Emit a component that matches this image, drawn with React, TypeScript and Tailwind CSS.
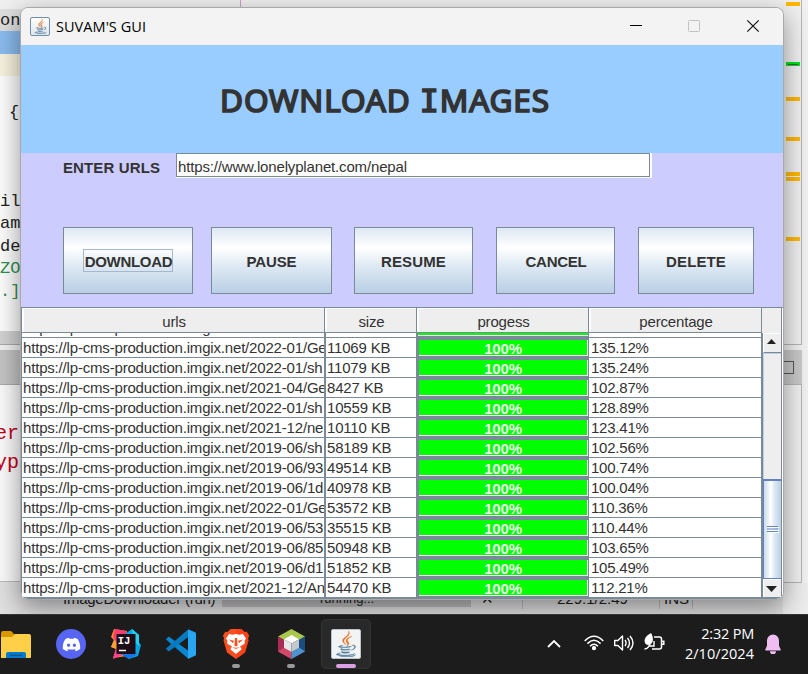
import { FaDiscord, FaJava } from "react-icons/fa";

const rows = [
  ["2022-01/Ge", "11069 KB", "135.12%"],
  ["2022-01/sh", "11079 KB", "135.24%"],
  ["2021-04/Ge", "8427 KB", "102.87%"],
  ["2022-01/sh", "10559 KB", "128.89%"],
  ["2021-12/ne", "10110 KB", "123.41%"],
  ["2019-06/sh", "58189 KB", "102.56%"],
  ["2019-06/93", "49514 KB", "100.74%"],
  ["2019-06/1d", "40978 KB", "100.04%"],
  ["2022-01/Ge", "53572 KB", "110.36%"],
  ["2019-06/53", "35515 KB", "110.44%"],
  ["2019-06/85", "50948 KB", "103.65%"],
  ["2019-06/d1", "51852 KB", "105.49%"],
  ["2021-12/An", "54470 KB", "112.21%"],
];

function JavaCup({ className }: { className: string }) {
  return (
    <span className={`relative block shrink-0 ${className}`}>
      <FaJava className="absolute inset-0 h-full w-full text-[#e4762b] [clip-path:inset(0_0_45%_0)]" stroke="#e4762b" strokeWidth="8" />
      <FaJava className="absolute inset-0 h-full w-full text-[#527f9d] [clip-path:inset(55%_0_0_0)]" stroke="#527f9d" strokeWidth="8" />
    </span>
  );
}

function TitleBar() {
  return (
    <div className="flex h-[37px] shrink-0 items-center bg-[#f3f3f3] pl-[9px]">
      <span className="flex h-[19px] w-5 items-center justify-center rounded-[2px] border border-[#6f8fa6] bg-gradient-to-b from-white to-[#dfe5ea]">
        <JavaCup className="h-[15px] w-[15px]" />
      </span>
      <span className="ml-[6px] w-[120px] whitespace-nowrap font-['Open_Sans',sans-serif] text-[14.5px] tracking-[0.05px] text-black">
        SUVAM'S GUI
      </span>
      <svg className="ml-auto mr-[20px] h-5 w-[142px]" viewBox="0 0 142 20" fill="none">
        <path d="M9 8.5h12" stroke="#000" />
        <rect x="67.5" y="3.5" width="11" height="11" rx="1" stroke="#c2c2c2" />
        <path d="M126.3 3.3l11.4 11.4M137.7 3.3l-11.4 11.4" stroke="#111" strokeWidth="1.2" />
      </svg>
    </div>
  );
}

function MetalButton({ label, className, focused }: { label: string; className: string; focused?: boolean }) {
  return (
    <button
      className={`flex h-[67px] shrink-0 items-center justify-center border border-[#7a8a99] bg-[linear-gradient(#dde8f3_0%,#ffffff_30%,#dde8f3_60%,#b8cfe5_100%)] text-[15px] font-bold leading-none text-[#333] ${className}`}
    >
      <span className={`flex h-[23px] items-center border pt-px ${focused ? "border-[#a3b8cc] pl-px" : "border-transparent"}`}>{label}</span>
    </button>
  );
}

function HeaderCell({ label, className }: { label: string; className: string }) {
  return (
    <div className={`h-[25px] shrink-0 border-b border-r border-[#7a8a99] ${className}`}>
      <div className="flex h-full items-center justify-center border-l-2 border-t border-white bg-[#eee] pt-px">{label}</div>
    </div>
  );
}

function Row({ url, size, percent }: { url: string; size: string; percent: string }) {
  return (
    <div className="flex h-5 shrink-0 leading-[19px]">
      <div className="h-full w-[304px] overflow-hidden whitespace-nowrap border-b border-r-2 border-[#7a8a99] pl-px">
        https://lp-cms-production.imgix.net/{url}
      </div>
      <div className="h-full w-[90px] border-b border-[#7a8a99] pl-[1px]">{size}</div>
      <div className="h-full w-[173px] border-b-2 border-l-[3px] border-r border-t-2 border-[#7a8a99]">
        <div className="flex h-full items-center justify-center border-b border-r border-white bg-[#00ff00] pt-px text-[15px] font-bold leading-none text-[#eee]">
          100%
        </div>
      </div>
      <div className="h-full w-[172px] border-b border-[#7a8a99] pl-[2px] tracking-[-0.22px]">{percent}</div>
    </div>
  );
}

function ScrollBar() {
  return (
    <div className="flex h-full w-[21px] shrink-0 flex-col border-l-2 border-r border-[#7a8a99] bg-[#eee]">
      <div className="flex h-5 items-center justify-center border-b border-l border-t border-b-[#7a8a99] border-l-white border-t-white pb-[3px] pr-[2px]">
        <svg className="h-[5px] w-[9px]" viewBox="0 0 9 5"><path d="M4.5 0L9 5H0z" fill="#222" /></svg>
      </div>
      <div className="h-[126px] border-l border-t border-[#b8cfe5]" />
      <div className="flex h-[100px] items-center justify-center border-b border-l border-t-2 border-[#6382bf] bg-[linear-gradient(to_right,#c8dcef,#ffffff_40%,#e0eaf5_60%,#b8cfe5)]">
        <svg className="h-[7px] w-3" viewBox="0 0 12 7"><path d="M1 1.5h11M1 4.500h11M1 6.5h11" stroke="#fff" /><path d="M0 .5h11M0 3h11M0 5.500h11" stroke="#6382bf" strokeWidth="1.2" /></svg>
      </div>
      <div className="flex h-[18px] items-center justify-center border-l border-t border-white pr-[2px]">
        <svg className="h-[6px] w-[11px]" viewBox="0 0 11 6"><path d="M5.5 6L11 0H0z" fill="#222" /></svg>
      </div>
    </div>
  );
}

function DownloadTable() {
  return (
    <div className="flex h-[292px] shrink-0 flex-col border-b-2 border-l border-t border-[#7a8a99] bg-white text-[15px] leading-none tracking-[-0.18px] text-[#333]">
      <div className="flex shrink-0">
        <HeaderCell label="urls" className="w-[303px]" />
        <HeaderCell label="size" className="w-[92px]" />
        <HeaderCell label="progess" className="w-[172px]" />
        <HeaderCell label="percentage" className="w-[173px]" />
        <div className="h-[25px] w-5 border-r border-[#7a8a99] bg-[#eee]" />
      </div>
      <div className="flex h-[264px] overflow-hidden">
        <div className="flex w-[739px] shrink-0 flex-col overflow-hidden">
          <div className="flex h-[5px] shrink-0 items-end">
            <div className="flex h-[5px] w-[304px] items-end overflow-hidden whitespace-nowrap border-b border-r-2 border-[#7a8a99] pl-px leading-[19px]">
              https://lp-cms-production.imgix.net/2022-01/Ge
            </div>
            <div className="h-[5px] w-[90px] border-b border-[#7a8a99]" />
            <div className="h-[5px] w-[173px] border-b-2 border-l-2 border-r border-[#7a8a99]">
              <div className="h-[3px] border-b border-white bg-[#00ff00]" />
            </div>
            <div className="h-[5px] w-[172px] border-b border-[#7a8a99]" />
          </div>
          {rows.map(([url, size, percent]) => (
            <Row key={size} url={url} size={size} percent={percent} />
          ))}
        </div>
        <ScrollBar />
      </div>
    </div>
  );
}

function AppWindow() {
  return (
    <div className="absolute left-[20px] top-[7px] flex h-[593px] w-[764px] flex-col overflow-hidden rounded-lg border border-[#a9a9a9] bg-[#eee] font-['Liberation_Sans',Arial,sans-serif] shadow-[0_8px_26px_rgba(0,0,0,0.42)]">
      <TitleBar />
      <div className="flex h-[108px] shrink-0 justify-center bg-[#99ccff] pr-[34px]">
        <h1 className="mt-[33px] whitespace-nowrap font-['Noto_Sans',sans-serif] text-[31.5px] font-normal leading-[44px] tracking-[0.9px] text-[#333] [-webkit-text-stroke:1.7px_#333] [stroke-linejoin:round]">
          DOWNLOAD <span className="font-['DejaVu_Sans_Mono',monospace]">I</span>MAGES
        </h1>
      </div>
      <div className="flex h-[154px] shrink-0 flex-col bg-[#ccccff]">
        <div className="flex h-[25px] shrink-0 pl-[42px]">
          <label className="w-[113px] pt-[4px] text-[15px] font-bold leading-[21px] tracking-[0.12px] text-[#333]">ENTER URLS</label>
          <div className="h-[25px] w-[476px] border-b border-r-2 border-white">
            <div className="h-6 border border-[#7a8a99] bg-white pl-px text-[15px] leading-[25px] tracking-[-0.16px] text-[#333]">
              https://www.lonelyplanet.com/nepal
            </div>
          </div>
        </div>
        <div className="mt-[49px] flex pl-[42px]">
          <MetalButton label="DOWNLOAD" className="w-[130px] tracking-[-0.3px]" focused />
          <MetalButton label="PAUSE" className="ml-[18px] w-[121px] tracking-[-0.15px]" />
          <MetalButton label="RESUME" className="ml-[22px] w-[119px] tracking-[0.15px]" />
          <MetalButton label="CANCEL" className="ml-[23px] w-[119px] pl-px tracking-[-0.25px]" />
          <MetalButton label="DELETE" className="ml-[23px] w-[116px] tracking-[0.1px]" />
        </div>
      </div>
      <DownloadTable />
    </div>
  );
}

function EditorBehind() {
  return (
    <div className="flex h-[614px] bg-[#f0f0f0] font-['Liberation_Mono',monospace] text-[17px] leading-[22px] text-[#222]">
      <div className="flex w-[783px] flex-col">
        <div className="h-[9px] pl-[240px]"><div className="h-full w-px bg-[#d59bd5]" /></div>
        <div className="h-[22px] bg-[#dedede] leading-[24px]">on</div>
        <div className="h-[23px] bg-[#8bbcf0]" />
        <div className="h-[22px] bg-[#f8f2df]" />
        <div className="h-[255px] bg-[#fdfdfd]">
          <div className="h-[115px] pl-[9px] pt-[26px]">{"{"}</div>
          <div>il</div>
          <div className="h-[23px]">am</div>
          <div>de</div>
          <div className="h-[23px] text-[#2f8f50]">ZO</div>
          <div className="text-[#2f8f50]">.]</div>
        </div>
        <div className="h-[14px] border-b border-[#aaa] bg-[#d2d2d2]" />
        <div className="h-[5px]" />
        <div className="h-[35px] border-b border-[#aaa] bg-[#c4c4c4]" />
        <div className="h-[197px] border-b border-[#bbb] bg-[#fafafa] pt-[34px] text-[20px] leading-[29px] text-[#c0001c]">
          <div className="-ml-[5px]">er</div>
          <div className="-ml-[5px]">yp</div>
        </div>
        <div className="flex h-8 items-start bg-[#e0e0e0] pt-[7px] font-['Liberation_Sans',sans-serif] text-[15px] leading-[20px]">
          <span className="w-[222px] pl-[63px] whitespace-nowrap tracking-[-0.25px]">ImageDownloader (run)</span>
          <span className="h-[18px] w-[249px] bg-[#bdbdbd] pl-[98px] text-[13px] leading-[20px]">running...</span>
          <span className="w-[51px] pl-[10px]">✕</span>
          <span className="w-[137px] border-l border-[#bbb] pl-[34px]">229:1/2:49</span>
          <span className="w-[34px] border-x border-[#bbb] pl-[4px]">INS</span>
        </div>
      </div>
      <div className="flex w-[25px] flex-col">
        <div className="flex h-[345px] w-[19px] flex-col items-start border-b border-r border-[#b5b5b5] bg-[#f0f0f0] pl-[3px]">
          <i className="mt-[2px] h-1 w-[14px] shrink-0 bg-[#ffb900]" />
          <i className="mt-14 flex h-1 w-[14px] shrink-0 items-center justify-center bg-[#00e51c]"><i className="h-px w-[10px] bg-[#555]" /></i>
          <i className="mt-[31px] h-1 w-[14px] shrink-0 bg-[#ffb900]" />
          <i className="mt-9 h-1 w-[14px] shrink-0 bg-[#ffb900]" />
          <i className="mt-[31px] h-1 w-[14px] shrink-0 bg-[#ffb900]" />
          <i className="mt-px h-1 w-[14px] shrink-0 bg-[#ffb900]" />
          <i className="mt-14 h-1 w-[14px] shrink-0 bg-[#ffb900]" />
        </div>
        <div className="mt-[5px] flex h-[34px] w-[19px] items-center bg-[#c9c9c9]">
          <i className="h-[13px] w-[11px] border border-l-0 border-[#555]" />
        </div>
        <div className="flex h-[199px] w-[19px] border-b border-r border-t border-[#b5b5b5] bg-[#f0f0f0]" />
        <div className="flex-1 bg-[#ececec]" />
      </div>
    </div>
  );
}

function VsCodeIcon() {
  return (
    <svg className="h-[30px] w-[30px]" viewBox="0 0 30 30">
      <path d="M2.8 7.6L.6 9.5a1 1 0 0 0 0 1.5L22 29.4V21.6z" fill="#0a86d0" />
      <path d="M.6 19a1 1 0 0 0 0 1.6l2.2 1.8L22 8.3V.4z" fill="#0879bd" />
      <path d="M22 0.2L29 3.2a1.5 1.5 0 0 1 1 1.4V25.4a1.5 1.5 0 0 1-1 1.4L22 30z" fill="#27a4f2" />
    </svg>
  );
}

function IdeaIcon() {
  return (
    <svg className="h-[30px] w-[30px]" viewBox="0 0 30 30">
      <path d="M3 0L16 2V27L2 29L5 20L0 18L3 11L0 8z" fill="#fd8b2b" />
      <path d="M4 0L15 2L18 6L6 14L2 8z" fill="#fb3c72" />
      <path d="M5 19L14 25L2 30z" fill="#fb3f91" />
      <path d="M3 11L6 14V20L0 18z" fill="#f9a03a" />
      <path d="M14 5L21 0L28 6L27 12L30 16L27 27L18 30L10 25z" fill="#08a4e8" />
      <path d="M21 0L28 6V17L22 11z" fill="#26cff0" />
      <path d="M10 25H27L18 30z" fill="#1674e4" />
      <rect x="5.5" y="5" width="19" height="20" fill="#1d0d17" />
      <text x="6.8" y="14.5" fill="#fff" fontSize="10.5" fontWeight="700" fontFamily="Liberation Mono, monospace">IJ</text>
      <path d="M8 21.5h7" stroke="#fff" strokeWidth="1.5" />
    </svg>
  );
}

function BraveIcon() {
  return (
    <svg className="h-[30px] w-[26px]" viewBox="0 0 26 30">
      <path d="M7.500 0h11l3 3 2.200-.3L26 6.500l-1 3 .5 2-3.500 12L13 30l-9-6.500L.5 11.500l.5-2-1-3L2.300 2.700 4.500 3z" fill="#fb4f20" />
      <path d="M13 0h5.500l3 3 2.200-.3L26 6.500l-1 3 .5 2-3.500 12L13 30z" fill="#ff3a12" opacity=".6" />
      <path d="M6 5l3.500.8L13 5l3.500.8L20 5l3 4.500-1.500 2.500.5 2-4 4.500 .5 2L13 25l-5.500-4.500.5-2L4 14l.5-2L3 9.500z" fill="#fff" />
      <path d="M6 10.500l5 1.200-1 2.500zM20 10.500l-5 1.200 1 2.500zM12 9h2l.6 7.500L13 17.500l-1.600-1zM9 18.300L13 20l4-1.700-4 .5zM5 15l4 2.500-1 1.500zM21 15l-4 2.500 1 1.500z" fill="#fb4f20" />
    </svg>
  );
}

function NetBeansIcon() {
  return (
    <svg className="h-[30px] w-[27px]" viewBox="0 0 27 30">
      <path d="M13.5 0L27 7.5L20 11.5L13.5 8L7 11.5L0 7.5z" fill="#a9c74c" />
      <path d="M0 7.5L6 11V18.5L13.5 23V30L0 22.5z" fill="#a72d56" />
      <path d="M0 22.5L6 18.5L13.5 23V30z" fill="#d24868" />
      <path d="M27 7.5L21 11V18.5L13.5 23V30L27 22.5z" fill="#4f92d0" />
      <path d="M27 7.5L21 11V18.5L27 22.5z" fill="#1c4b7e" />
      <path d="M13.5 6L21 10.3L13.5 14.6L6 10.3z" fill="#fff" />
      <path d="M6 10.3L13.5 14.6V23L6 18.7z" fill="#e4e6e8" />
      <path d="M21 10.3L13.5 14.6V23L21 18.7z" fill="#c2c9cf" />
    </svg>
  );
}

function Taskbar() {
  return (
    <div className="flex h-[60px] items-start border-t border-[#333] bg-[#1c1c1c] text-white">
      <svg className="ml-px mt-4 h-7 w-[30px] shrink-0" viewBox="0 0 30 28">
        <path d="M0 2a2 2 0 0 1 2-2h8l4 4v8H0z" fill="#dc9800" />
        <path d="M0 6h11l3-3h14a2 2 0 0 1 2 2v21a1 1 0 0 1-1 1H0z" fill="#ffcf48" />
        <path d="M5 27v-4a2 2 0 0 1 2-2h16a2 2 0 0 1 2 2v4z" fill="#0878c9" />
        <path d="M9 24.3h12" stroke="#075493" strokeWidth="1.2" />
      </svg>
      <span className="ml-[25px] mt-[14px] flex h-[30px] w-[30px] shrink-0 items-center justify-center rounded-full bg-[#5865f2]">
        <FaDiscord className="h-[19px] w-[19px]" />
      </span>
      <span className="ml-[25px] mt-[14px] shrink-0"><IdeaIcon /></span>
      <span className="ml-[25px] mt-[14px] shrink-0"><VsCodeIcon /></span>
      <span className="ml-[25px] mt-[14px] flex w-[30px] shrink-0 flex-col items-center">
        <BraveIcon />
        <i className="mt-[5px] h-1 w-2 rounded-full bg-[#999]" />
      </span>
      <span className="ml-[25px] mt-[14px] flex w-[30px] shrink-0 flex-col items-center">
        <NetBeansIcon />
        <i className="mt-[5px] h-1 w-2 rounded-full bg-[#999]" />
      </span>
      <span className="ml-[15px] mt-[4px] flex h-[50px] w-[50px] shrink-0 flex-col items-center rounded-[5px] border border-[#343434] bg-[#292929] pt-[9px]">
        <span className="flex h-[30px] w-[30px] items-center justify-center rounded-[2px] border border-[#b7c4ce] bg-[#f3f3f3]">
          <JavaCup className="h-[26px] w-[26px]" />
        </span>
        <i className="mt-[5px] h-1 w-5 shrink-0 rounded-full bg-[#dda0e4]" />
      </span>
      <svg className="ml-[176px] mt-[24px] h-[10px] w-[14px] shrink-0" viewBox="0 0 14 10" fill="none">
        <path d="M1 8l6-6 6 6" stroke="#fff" strokeWidth="1.8" />
      </svg>
      <svg className="ml-[23px] mt-[20px] h-4 w-5 shrink-0" viewBox="0 0 20 16" fill="none" stroke="#fff" strokeWidth="1.5">
        <path d="M.7 6Q10-3.4 19.3 6M3.4 8.6Q10 2 16.6 8.6M6 11.2Q10 7.2 14 11.2" />
        <circle cx="10" cy="13.2" r="1.4" fill="#fff" />
      </svg>
      <svg className="ml-[10px] mt-[19px] h-[18px] w-5 shrink-0" viewBox="0 0 20 18" fill="none" stroke="#fff" strokeWidth="1.4">
        <path d="M.7 6.5h3.2L8.5 2v14L3.900 11.500H.7z" strokeLinejoin="round" />
        <path d="M11 6q2.200 3 0 6M13.500 4q4 5 0 10M16 2q6 7 0 14" />
      </svg>
      <svg className="ml-[10px] mt-[18px] h-[18px] w-[21px] shrink-0" viewBox="0 0 21 18" fill="none" stroke="#fff" strokeWidth="1.5">
        <path d="M10 4h5.500a2 2 0 0 1 2 2v8a2 2 0 0 1-2 2H8M18.300 8.200h1.500v3h-1.500" />
        <path d="M7 0C1.500 3 .2 6 .7 9c.5 2.500 3 3.500 5.300 2.500C9.500 10 10 5 7 0z" fill="#fff" stroke="none" />
        <path d="M.5 16C4 15.800 6 13 6.200 8M10 8v5H4.500" strokeWidth="1.4" />
      </svg>
      <div className="mt-[9px] w-[89px] shrink-0 whitespace-nowrap text-right font-['Open_Sans',sans-serif] text-[14.5px] leading-[20px]">
        <div className="tracking-[-0.2px]">2:32 PM</div>
        <div className="tracking-[0.05px]">2/10/2024</div>
      </div>
      <svg className="ml-[11px] mt-[19px] h-5 w-4 shrink-0" viewBox="0 0 16 20" fill="#efbdf1">
        <path d="M8 .5a6 6 0 0 0-6 6v5.200L.3 15.400a.7.7 0 0 0 .6 1h14.200a.7.7 0 0 0 .6-1L14 11.700V6.500a6 6 0 0 0-6-6zM5 17.300h6a3 3 0 0 1-6 0z" />
      </svg>
    </div>
  );
}

export default function App() {
  return (
    <div className="relative flex h-[674px] w-[808px] flex-col overflow-hidden">
      <EditorBehind />
      <AppWindow />
      <div className="relative"><Taskbar /></div>
    </div>
  );
}
